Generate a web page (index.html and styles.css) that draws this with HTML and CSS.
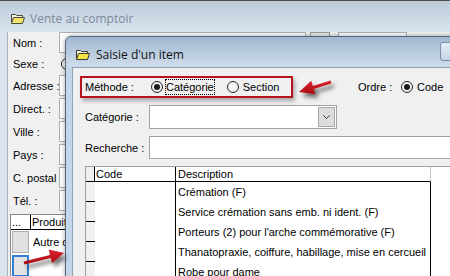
FILE: index.html
```html
<!DOCTYPE html>
<html lang="fr">
<head>
    <meta charset="UTF-8">
    <title>Saisie d'un item</title>
    <link rel="stylesheet" href="styles.css">
</head>
<body>
    <!-- fenêtre en arrière-plan -->
    <div class="win back">
        <div class="caption">
            <svg class="folder" width="14" height="11" viewBox="0 0 14 11">
                <path d="M0.5 9.5 V1.5 H4.5 L5.5 2.5 H11.5 V4.5" fill="#f4f1dc" stroke="#4a4a3a"/>
                <polygon points="0.5,10.5 2.5,4.5 13.5,4.5 11.5,10.5" fill="#efe36a" stroke="#4a4a3a"/>
            </svg>
            <span class="caption-text">Vente au comptoir</span>
        </div>
        <div class="back-client">
            <div class="fields">
                <div class="field first">
                    <label>Nom :</label>
                    <span class="edit w-nom"></span>
                    <span class="btn-sm"></span>
                    <span class="edit w-pre"></span>
                </div>
                <div class="field sexe">
                    <label>Sexe :</label>
                    <span class="radio"></span>
                </div>
                <div class="field"><label>Adresse :</label><span class="edit"></span></div>
                <div class="field"><label>Direct. :</label><span class="edit"></span></div>
                <div class="field"><label>Ville :</label><span class="edit"></span></div>
                <div class="field"><label>Pays :</label><span class="edit"></span></div>
                <div class="field"><label>C. postal :</label><span class="edit"></span></div>
                <div class="field"><label>Tél. :</label><span class="edit"></span></div>
            </div>

            <div class="back-grid">
                <div class="bg-row bg-head">
                    <span class="bg-sel">...</span>
                    <span class="bg-prod">Produit</span>
                </div>
                <div class="bg-row">
                    <span class="bg-sel"><i class="rowbtn"></i></span>
                    <span class="bg-prod">Autre choix</span>
                </div>
                <div class="bg-row">
                    <span class="bg-sel"><i class="rowbtn current"></i></span>
                    <span class="bg-prod"></span>
                </div>
            </div>
        </div>
    </div>

    <!-- boîte de dialogue active -->
    <div class="win dialog">
        <div class="caption">
            <svg class="folder" width="14" height="11" viewBox="0 0 14 11">
                <path d="M0.5 9.5 V1.5 H4.5 L5.5 2.5 H11.5 V4.5" fill="#f4f1dc" stroke="#3a3a2a"/>
                <polygon points="0.5,10.5 2.5,4.5 13.5,4.5 11.5,10.5" fill="#f2e24c" stroke="#3a3a2a"/>
            </svg>
            <span class="caption-text">Saisie d'un item</span>
            <span class="cap-btn"></span>
        </div>
        <div class="dlg-client">
            <div class="method-row">
                <div class="method-box">
                    <span class="lbl-method">Méthode :</span>
                    <span class="radio on"></span>
                    <span class="opt focus">Catégorie</span>
                    <span class="radio r2"></span>
                    <span class="opt o2">Section</span>
                </div>
                <span class="lbl-order">Ordre :</span>
                <span class="radio on"></span>
                <span class="opt o3">Code</span>
            </div>

            <div class="form-row cat-row">
                <span class="lbl">Catégorie :</span>
                <div class="combo">
                    <span class="drop">
                        <svg width="7" height="4" viewBox="0 0 7 4"><path d="M0.5 0.5 L3.5 3.5 L6.5 0.5" fill="none" stroke="#333"/></svg>
                    </span>
                </div>
            </div>

            <div class="form-row search-row">
                <span class="lbl">Recherche :</span>
                <div class="textbox"></div>
            </div>

            <div class="grid">
                <div class="g-row g-head">
                    <div class="g-rh"></div>
                    <div class="g-code">Code</div>
                    <div class="g-desc">Description</div>
                </div>
                <div class="g-row">
                    <div class="g-rh"></div>
                    <div class="g-code"></div>
                    <div class="g-desc">Crémation (F)</div>
                </div>
                <div class="g-row">
                    <div class="g-rh"></div>
                    <div class="g-code"></div>
                    <div class="g-desc">Service crémation sans emb. ni ident. (F)</div>
                </div>
                <div class="g-row">
                    <div class="g-rh"></div>
                    <div class="g-code"></div>
                    <div class="g-desc">Porteurs (2) pour l'arche commémorative (F)</div>
                </div>
                <div class="g-row">
                    <div class="g-rh"></div>
                    <div class="g-code"></div>
                    <div class="g-desc">Thanatopraxie, coiffure, habillage, mise en cercueil</div>
                </div>
                <div class="g-row">
                    <div class="g-rh"></div>
                    <div class="g-code"></div>
                    <div class="g-desc">Robe pour dame</div>
                </div>
            </div>
        </div>
    </div>

    <!-- flèches d'annotation -->
    <svg class="marks" width="450" height="276" viewBox="0 0 450 276">
        <defs>
            <filter id="sh" x="-30%" y="-40%" width="170%" height="200%">
                <feDropShadow dx="3" dy="4" stdDeviation="2" flood-color="#000" flood-opacity="0.55"/>
            </filter>
            <linearGradient id="red" x1="0" y1="0" x2="0" y2="1">
                <stop offset="0" stop-color="#dc222c"/>
                <stop offset="1" stop-color="#a50c14"/>
            </linearGradient>
        </defs>
        <polygon filter="url(#sh)" fill="url(#red)" points="330.6,80.6 312.9,86.1 311.2,80.8 299,92 315.4,94.2 313.7,88.9 331.4,83.4"/>
        <polygon filter="url(#sh)" fill="url(#red)" points="23.6,261.5 50,254.9 48.7,249.6 64,253 52.1,263.2 50.8,257.9 24.4,264.5"/>
    </svg>
</body>
</html>
```

FILE: styles.css
```css
* {
    margin: 0;
    padding: 0;
    box-sizing: border-box;
}

body {
    width: 450px;
    height: 276px;
    overflow: hidden;
    position: relative;
    background: #f0f0f0;
    font-family: "Liberation Sans", Arial, sans-serif;
    font-size: 11px;
    color: #000;
}

.win {
    position: absolute;
}

/* ---- title bars ---- */
.caption {
    display: flex;
    align-items: center;
    padding-top: 4px;
}

.caption-text {
    font-family: "Open Sans", "Noto Sans", sans-serif;
    font-size: 12px;
}

/* ---- back window ---- */
.back {
    left: 0;
    top: 0;
    width: 640px;
    height: 330px;
    border-top: 1px solid #4e4e4e;
    background: linear-gradient(#bccad8 0, #d9e4ef 30px, #dbe4ee 31px, #dde6ef 100%);
}

.back .caption {
    height: 31px;
    padding-left: 11px;
}

.back .caption-text {
    margin-left: 5px;
    color: #7d8998;
}

.back-client {
    margin-left: 7px;
    height: 300px;
    border-left: 1px solid #a3b3c4;
    background: #f0f0f0;
}

.field {
    display: flex;
    align-items: center;
    height: 21px;
    margin-bottom: 2px;
}

.field.sexe {
    height: 18px;
}

.field label {
    width: 51px;
    padding-left: 5px;
    white-space: nowrap;
    flex: none;
}

.edit {
    width: 300px;
    height: 21px;
    background: #fff;
    border: 1px solid #abadb3;
    flex: none;
}

.edit.w-nom {
    width: 247px;
}

.btn-sm {
    width: 20px;
    height: 21px;
    margin-left: 4px;
    border: 1px solid #9a9a9a;
    background: #e8e8e8;
    flex: none;
}

.edit.w-pre {
    width: 69px;
    margin-left: 8px;
}

.sexe .radio {
    margin-left: 2px;
}

.back-grid {
    margin: 3px 0 0 2px;
    border: 1px solid #828790;
    background: #fff;
}

.bg-row {
    display: flex;
    height: 24px;
}

.bg-head {
    height: 15px;
    border-bottom: 1px solid #000;
    line-height: 14px;
}

.bg-sel {
    width: 20px;
    padding-left: 1px;
    border-right: 1px solid transparent;
    flex: none;
}

.bg-head .bg-sel {
    border-right-color: #000;
}

.bg-prod {
    padding: 6px 0 0 2px;
    white-space: nowrap;
}

.bg-head .bg-prod {
    padding-top: 0;
    padding-left: 1px;
}

.rowbtn {
    display: block;
    width: 17px;
    height: 22px;
    margin-top: 1px;
    background: #e1e1e1;
    border: 1px solid #adadad;
}

.rowbtn.current {
    border: 2px solid #2f80d2;
    background: #e3e3e3;
}

/* ---- dialog ---- */
.dialog {
    left: 65px;
    top: 36px;
    width: 425px;
    height: 260px;
    border: 1px solid #53647a;
    border-radius: 6px 6px 0 0;
    background: linear-gradient(#9fb7d1 0, #cfdcea 29px, #c3d6ea 30px, #c3d6ea 100%);
    box-shadow: 0 0 5px rgba(0, 0, 0, 0.35);
}

.dialog .caption {
    height: 30px;
    padding-left: 10px;
    padding-right: 6px;
}

.dialog .caption-text {
    margin-left: 6px;
    color: #111;
}

.cap-btn {
    margin-left: auto;
    width: 43px;
    height: 19px;
    margin-top: -5px;
    border: 1px solid #7a8ea8;
    border-radius: 3px;
    background: linear-gradient(#e6edf5, #c5d4e4);
}

.dlg-client {
    margin-left: 6px;
    height: 230px;
    border: 1px solid #8fa3b9;
    border-right: none;
    background: #f0f0f0;
    padding: 8px 0 0 12px;
}

.method-row {
    display: flex;
    align-items: center;
    height: 22px;
}

.method-box {
    display: flex;
    align-items: center;
    width: 213px;
    height: 22px;
    margin-left: -5px;
    padding-left: 3px;
    border: 2px solid #b5121b;
    box-shadow: 2px 3px 4px rgba(0, 0, 0, 0.3);
}

.lbl-method {
    width: 66px;
    flex: none;
}

.radio {
    width: 12px;
    height: 12px;
    border-radius: 50%;
    border: 1px solid #2a2a2a;
    background: radial-gradient(circle at 40% 40%, #fff 0, #e2e2e2 100%);
    flex: none;
    position: relative;
}

.radio.on::after {
    content: "";
    position: absolute;
    left: 2px;
    top: 2px;
    width: 6px;
    height: 6px;
    border-radius: 50%;
    background: #1c1c1c;
}

.opt {
    margin-left: 2px;
    border: 1px dotted transparent;
    line-height: 14px;
}

.opt.focus {
    border-color: #000;
}

.radio.r2 {
    margin-left: 12px;
}

.opt.o2 {
    margin-left: 3px;
}

.lbl-order {
    width: 43px;
    margin-left: 65px;
    flex: none;
}

.opt.o3 {
    margin-left: 3px;
}

.form-row {
    display: flex;
    align-items: center;
}

.lbl {
    width: 64px;
    flex: none;
}

.cat-row {
    height: 24px;
    margin-top: 7px;
}

.combo {
    display: flex;
    justify-content: flex-end;
    width: 188px;
    height: 24px;
    padding: 1px;
    border: 1px solid #a2a2a2;
    background: #fff;
}

.drop {
    display: flex;
    align-items: center;
    justify-content: center;
    width: 17px;
    height: 20px;
    border: 1px solid #a8a8a8;
    background: #dcdcdc;
}

.search-row {
    height: 23px;
    margin-top: 7px;
}

.textbox {
    flex: 1;
    height: 23px;
    border: 1px solid #a2a2a2;
    background: #fff;
}

/* ---- grid ---- */
.grid {
    margin-top: 7px;
    border-top: 1px solid #a0a0a0;
    border-left: 1px solid #a0a0a0;
    background: #fff;
}

.g-row {
    display: flex;
    height: 20px;
    line-height: 18px;
}

.g-head {
    height: 15px;
    line-height: 14px;
}

.g-rh {
    width: 9px;
    background: #f0f0f0;
    border-bottom: 1px solid #000;
    flex: none;
}

.g-head .g-rh {
    border-right: 1px solid #000;
}

.g-code {
    width: 81px;
    padding-left: 1px;
    border-right: 1px solid #000;
    flex: none;
}

.g-desc {
    width: 255px;
    padding: 1px 0 0 2px;
    border-right: 1px solid #000;
    white-space: nowrap;
    overflow: hidden;
    flex: none;
}

.g-head .g-code,
.g-head .g-desc {
    padding-top: 0;
    border-bottom: 1px solid #000;
}

.g-head .g-desc {
    border-right-color: #c8c8c8;
}

/* ---- annotation arrows ---- */
.marks {
    position: absolute;
    left: 0;
    top: 0;
    pointer-events: none;
}
```
